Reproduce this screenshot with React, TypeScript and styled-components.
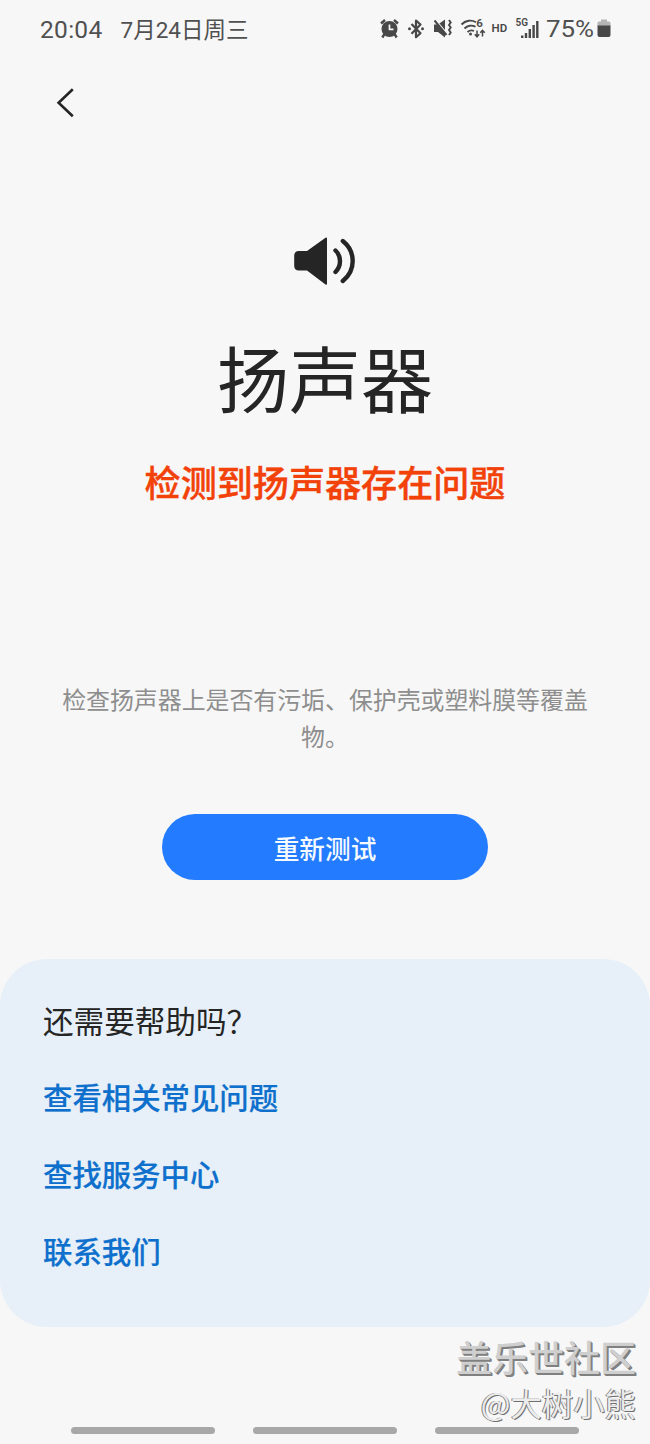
import React from "react";
import styled, { createGlobalStyle } from "styled-components";

const GlobalStyle = createGlobalStyle`
  * { box-sizing: border-box; }
  body {
    margin: 0;
    background: #f7f7f7;
    font-family: "Noto Sans CJK SC", "Noto Sans", sans-serif;
    color: #252525;
  }
`;

const Screen = styled.main`
  position: relative;
  display: flex;
  flex-direction: column;
  width: 650px;
  height: 1444px;
  overflow: hidden;
  background: #f7f7f7;
`;

const StatusBar = styled.header`
  display: flex;
  align-items: center;
  justify-content: space-between;
  height: 58px;
  padding: 0 38px 0 40px;
  color: #505050;
`;

const StatusLeft = styled.div`
  display: flex;
  gap: 18px;
  padding-top: 2px;
  white-space: nowrap;
`;

const StatusText = styled.span<{ $size: number; $spacing?: number }>`
  font-family: Roboto, "Noto Sans CJK SC", sans-serif;
  font-size: ${(p) => p.$size}px;
  letter-spacing: ${(p) => p.$spacing ?? 0}px;
  line-height: 30px;
`;

const StatusIcons = styled.svg`
  display: block;
  width: 234px;
  height: 30px;
`;

const NavBar = styled.nav`
  display: flex;
  align-items: center;
  height: 90px;
  padding-left: 54px;
`;

const BackButton = styled.button`
  display: flex;
  padding: 0;
  border: 0;
  background: none;
`;

const Hero = styled.section`
  display: flex;
  flex-direction: column;
  align-items: center;
  padding-top: 86px;
`;

const Title = styled.h1`
  margin: 38px 0 0;
  font-size: 72px;
  font-weight: 400;
  line-height: 104px;
`;

const Problem = styled.p`
  margin: 27px 0 0;
  font-size: 36.1px;
  font-weight: 500;
  line-height: 52px;
  color: #f2420a;
  -webkit-text-stroke: 0.4px #f2420a;
`;

const Hint = styled.p`
  width: 530px;
  margin: 173px 0 0;
  font-size: 23.9px;
  line-height: 37px;
  text-align: center;
  color: #8e8e8e;
`;

const RetryButton = styled.button`
  width: 326px;
  height: 66px;
  margin-top: 60px;
  padding: 1px 0 0;
  border: 0;
  border-radius: 33px;
  background: #237bff;
  color: #f5faff;
  font-family: inherit;
  font-size: 25.7px;
  font-weight: 500;
`;

const HelpPanel = styled.section`
  display: flex;
  flex-direction: column;
  align-items: flex-start;
  height: 368px;
  margin-top: 79px;
  padding: 39px 43px 0;
  border-radius: 47px;
  background: #e7f0f8;
`;

const HelpTitle = styled.h2`
  margin: 0 0 32px;
  font-size: 30.6px;
  font-weight: 400;
  line-height: 44px;
`;

const HelpLink = styled.a`
  margin-bottom: 33px;
  font-size: 29.4px;
  font-weight: 500;
  line-height: 44px;
  color: #0e70cc;
  -webkit-text-stroke: 0.2px #0e70cc;
`;

const Gestures = styled.div`
  display: flex;
  gap: 38px;
  margin-top: 100px;
  padding-left: 71px;
`;

const GestureBar = styled.div`
  width: 144px;
  height: 7px;
  border-radius: 4px;
  background: #a8a8a8;
`;

const Watermark = styled.div`
  position: absolute;
  right: 14px;
  bottom: 19px;
  display: flex;
  flex-direction: column;
  align-items: flex-end;
  white-space: nowrap;
`;

const Community = styled.span`
  font-size: 36px;
  font-weight: 500;
  line-height: 50px;
  color: #cfcfcf;
  text-shadow: 1px 1px 0 #808080, 2px 2px 0 #808080;
`;

const Author = styled.span`
  font-size: 31.4px;
  font-weight: 400;
  line-height: 44px;
  color: #ececec;
  text-shadow: 1px 1px 0 #707070, -1px 0 0 #808080;
`;

const Icons = () => (
  <StatusIcons viewBox="378 14 234 30" fill="none" stroke="#484848">
    {/* alarm */}
    <circle cx="389.500" cy="29" r="8" fill="#484848" stroke="none" />
    <path d="M381 23.500l4-3.500M398 23.500l-4-3.500M384.500 34l-2.200 3.500M394.500 34l2.200 3.500" strokeWidth="2.400" />
    <path d="M389.500 24.500v4.800h4" stroke="#f7f7f7" strokeWidth="1.700" />
    {/* bluetooth */}
    <path d="M411.500 24l9 9.200-4.500 4V20.500l4.500 4-9 9.200" strokeWidth="2.200" strokeLinejoin="round" />
    <circle cx="409.500" cy="28.800" r="1.500" fill="#484848" stroke="none" />
    <circle cx="422.500" cy="28.800" r="1.500" fill="#484848" stroke="none" />
    {/* vibrate and mute */}
    <path d="M434 24.500h4l7-5v18l-7-5.500h-4z" fill="#484848" stroke="none" />
    <path d="M436 20.500l11 13" stroke="#f7f7f7" strokeWidth="1.500" />
    <path d="M434.500 20.500l12 14.500" strokeWidth="2" />
    <path d="M449 20l1.700 2.500-1.700 2.500 1.700 2.500-1.700 2.500 1.700 2.500-1.700 2.500" strokeWidth="1.900" />
    {/* wifi 6 */}
    <path d="M461.500 24.500c4-4.200 10-5 14.500-2.300M464.500 28.500c3-3 7.500-3.700 11-1.700M467.500 32c2-1.700 4.500-2 6.500-1" strokeWidth="1.900" />
    <circle cx="470.500" cy="34" r="1.500" fill="#484848" stroke="none" />
    <path d="M477 30.500v6M474.800 34.300l2.200 2.500 2.200-2.500M482.500 36.500v-6M480.300 32.800l2.200-2.500 2.200 2.500" strokeWidth="1.500" />
    <text x="476.300" y="27.300" fontSize="11.500" fontWeight="600" fontFamily="Roboto, sans-serif" fill="#484848" stroke="none">6</text>
    <text x="491.500" y="32.300" fontSize="11.500" fontWeight="600" fontFamily="Roboto, sans-serif" fill="#484848" stroke="none">HD</text>
    <text x="515.500" y="26" fontSize="10" fontWeight="600" fontFamily="Roboto, sans-serif" fill="#484848" stroke="none">5G</text>
    {/* signal */}
    <path d="M522.200 38v-2.500M526 38v-5M529.800 38v-9M533.600 38V25M537.300 38V21" strokeWidth="2.400" />
    <text x="546" y="37" fontSize="24.500" textLength="48" lengthAdjust="spacingAndGlyphs" fontFamily="Roboto, sans-serif" fill="#505050" stroke="none">75%</text>
    {/* battery */}
    <path d="M601 19.500h6v2h2q1.500 0 1.500 1.500v3h-13v-3q0-1.500 1.500-1.500h2z" fill="#b4b4b4" stroke="none" />
    <path d="M597.500 25.500h13V35q0 2-2 2h-9q-2 0-2-2z" fill="#484848" stroke="none" />
  </StatusIcons>
);

const BackIcon = () => (
  <svg width="24" height="32" viewBox="54 87 24 32" fill="none" stroke="#252525" strokeWidth="2.600">
    <path d="M72.800 89.300L58.600 102.800L72.800 116.300" />
  </svg>
);

const SpeakerIcon = () => (
  <svg width="64" height="52" viewBox="293 234 64 52">
    <path
      d="M299 251h8l18.500-13.200q1.500-.8 1.500 1v45q0 1.600-1.500.8L307 270.500h-8q-4.800 0-4.800-4.800v-9.900q0-4.800 4.800-4.800z"
      fill="#252525"
    />
    <path
      d="M335.500 250.500c6 5.500 6 15.500 0 21.500M342.800 241c13.200 10.500 13.200 29.500 0 40"
      fill="none"
      stroke="#252525"
      strokeWidth="4.400"
      strokeLinecap="round"
    />
  </svg>
);

const links = ["查看相关常见问题", "查找服务中心", "联系我们"];

export default function App() {
  return (
    <Screen>
      <GlobalStyle />
      <StatusBar>
        <StatusLeft>
          <StatusText $size={24.5} $spacing={0.3}>20:04</StatusText>
          <StatusText $size={22.5}>7月24日周三</StatusText>
        </StatusLeft>
        <Icons />
      </StatusBar>
      <NavBar>
        <BackButton aria-label="返回">
          <BackIcon />
        </BackButton>
      </NavBar>
      <Hero>
        <SpeakerIcon />
        <Title>扬声器</Title>
        <Problem>检测到扬声器存在问题</Problem>
        <Hint>检查扬声器上是否有污垢、保护壳或塑料膜等覆盖物。</Hint>
        <RetryButton>重新测试</RetryButton>
      </Hero>
      <HelpPanel>
        <HelpTitle>还需要帮助吗？</HelpTitle>
        {links.map((label) => (
          <HelpLink key={label}>{label}</HelpLink>
        ))}
      </HelpPanel>
      <Gestures>
        <GestureBar />
        <GestureBar />
        <GestureBar />
      </Gestures>
      <Watermark>
        <Community>盖乐世社区</Community>
        <Author>@大树小熊</Author>
      </Watermark>
    </Screen>
  );
}
